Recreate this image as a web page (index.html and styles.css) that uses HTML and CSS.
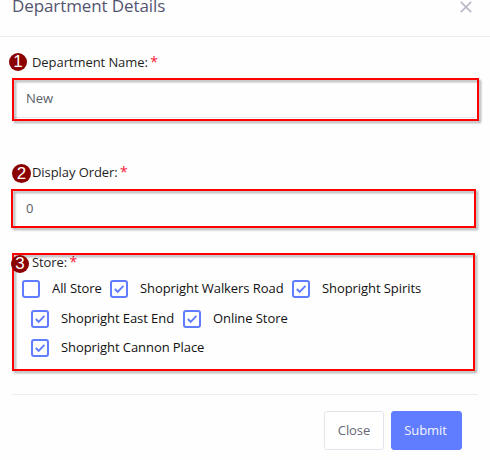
FILE: index.html
```html
<!DOCTYPE html>
<html lang="en">
<head>
<meta charset="utf-8">
<title>Department Details</title>
<link rel="stylesheet" href="styles.css">
</head>
<body>
<div class="modal">
  <header class="header">
    <h1 class="title">Department Details</h1>
    <svg class="close" viewBox="0 0 12 12"><path d="M.8.8 11.2 11.2M11.2.8.8 11.2"/></svg>
  </header>
  <main>
    <section class="field name">
      <div class="label"><span class="badge">1</span>Department Name: <b>*</b></div>
      <div class="frame"><span class="input">New</span></div>
    </section>
    <section class="field order">
      <div class="label"><span class="badge">2</span>Display Order: <b>*</b></div>
      <div class="frame"><span class="input">0</span></div>
    </section>
    <section class="frame stores">
      <div class="label"><span class="badge">3</span>Store: <b>*</b></div>
      <div class="row">
        <span class="option first"><i class="box"></i>All Store</span>
        <span class="option second"><i class="box"><svg viewBox="0 0 18 18"><path d="M4.8 9 7.7 11.8 13.4 5.8"/></svg></i>Shopright Walkers Road</span>
        <span class="option"><i class="box"><svg viewBox="0 0 18 18"><path d="M4.8 9 7.7 11.8 13.4 5.8"/></svg></i>Shopright Spirits</span>
      </div>
      <div class="row indent">
        <span class="option east"><i class="box"><svg viewBox="0 0 18 18"><path d="M4.8 9 7.7 11.8 13.4 5.8"/></svg></i>Shopright East End</span>
        <span class="option"><i class="box"><svg viewBox="0 0 18 18"><path d="M4.8 9 7.7 11.8 13.4 5.8"/></svg></i>Online Store</span>
      </div>
      <div class="row indent last">
        <span class="option"><i class="box"><svg viewBox="0 0 18 18"><path d="M4.8 9 7.7 11.8 13.4 5.8"/></svg></i>Shopright Cannon Place</span>
      </div>
    </section>
  </main>
  <footer class="footer">
    <button class="btn">Close</button>
    <button class="btn primary">Submit</button>
  </footer>
</div>
</body>
</html>
```
FILE: styles.css
```css
* { box-sizing: border-box; }
body {
  margin: 0;
  background: #fefefe;
  font: 13px/20px "Open Sans", "Noto Sans", sans-serif;
  letter-spacing: -.07px;
  color: #212529;
  overflow: hidden;
}
.modal { height: 460px; overflow: hidden; }
.header {
  display: flex;
  justify-content: space-between;
  align-items: flex-start;
  height: 37px;
  padding: 0 18px 0 12px;
  border-bottom: 1px solid #ebedf2;
}
.title {
  margin: -7px 0 0;
  font-size: 17px;
  line-height: 26px;
  font-weight: 400;
  letter-spacing: -.1px;
  color: #535570;
}
.close {
  width: 12px;
  height: 12px;
  margin-top: 1px;
  fill: none;
  stroke: #b9bac7;
  stroke-width: 1.7;
}
.label {
  position: relative;
  height: 20px;
  padding-left: 32px;
  color: #1f1f1f;
}
.label b { margin-left: -1px; font-weight: 500; font-size: 14px; line-height: 1; color: #fb1538; }
.badge {
  position: absolute;
  z-index: 2;
  left: 9px;
  top: 1px;
  width: 18px;
  height: 18px;
  border-radius: 50%;
  background: #8b0000;
  color: #fff;
  font: 17px/17px "Liberation Sans", sans-serif;
  text-align: center;
}
.field.name { padding-top: 15px; }
.name .frame { width: 467px; height: 43px; margin: 6px 0 0 12px; }
.field.order { padding-top: 41px; }
.order .badge { left: 12px; top: 2px; width: 19px; height: 19px; line-height: 19px; }
.order .frame { width: 465px; height: 39px; margin: 7px 0 0 11px; }
.frame { position: relative; }
.frame::after {
  content: "";
  position: absolute;
  inset: 0;
  border: 2px solid #f00;
  filter: drop-shadow(2.5px 2.5px 1px rgba(0, 0, 0, .34));
  pointer-events: none;
}
.input {
  display: flex;
  align-items: center;
  height: 40px;
  padding-left: 14px;
  color: #5a6068;
}
.name .input {
  margin-right: 2px;
  border-bottom: 1px solid #e2e5ec;
  border-radius: 4px;
}
.order .input { height: 38px; padding-left: 15px; }
.stores { width: 463px; height: 118px; margin: 25px 0 0 12px; }
.stores .label { padding-left: 20px; height: 25px; line-height: 18px; }
.stores .badge { left: -1px; top: 2px; }
.row {
  display: flex;
  align-items: center;
  height: 20px;
  padding-left: 10px;
  color: #111;
}
.row.indent { padding-left: 19px; margin-top: 10px; }
.row.last { margin-top: 9px; }
.option { display: flex; align-items: center; gap: 12px; white-space: nowrap; }
.option.first { width: 88px; }
.option.second { width: 182px; }
.option.east { width: 152px; }
.box {
  width: 18px;
  height: 18px;
  flex: none;
  margin-top: 1px;
  border: 2px solid #607cff;
  border-radius: 3px;
}
.box svg {
  display: block;
  width: 18px;
  height: 18px;
  margin: -2px;
  fill: none;
  stroke: #607cff;
  stroke-width: 1.9;
}
.footer {
  display: flex;
  justify-content: flex-end;
  gap: 7px;
  width: 466px;
  margin: 23px 0 0 12px;
  padding: 16px 16px 0 0;
  border-top: 1px solid #ebedf2;
}
.btn {
  width: 60px;
  height: 39px;
  padding: 0 0 2px;
  border: 1px solid #e2e5ec;
  border-radius: 3px;
  background: #fff;
  color: #646776;
  font: inherit;
  letter-spacing: inherit;
}
.btn.primary { width: 71px; padding-right: 2px; border-color: #607cff; background: #607cff; color: #f4f5ff; }
```
